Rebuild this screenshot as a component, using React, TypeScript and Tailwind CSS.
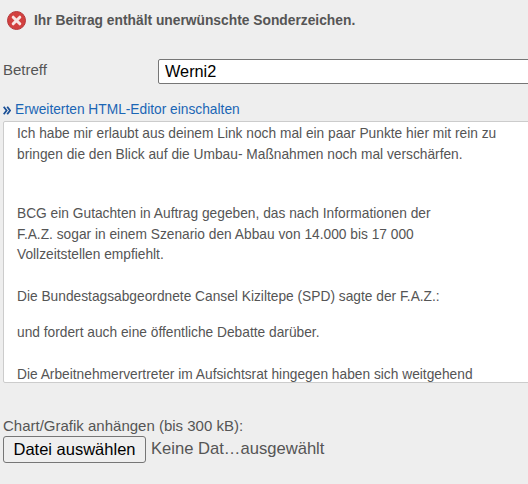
export default function App() {
  const font = { fontFamily: '"Liberation Sans", Arial, sans-serif' };
  return (
    <div style={font} className="w-[528px] h-[484px] overflow-hidden bg-[#eeeeee] text-[#555555] font-['Liberation_Sans',Arial,sans-serif]">
      <div className="flex items-center h-[21px] mt-[10px] ml-[7px] gap-[8px]">
        <svg width="19" height="19" viewBox="0 0 19 19" className="shrink-0">
          <circle cx="9.5" cy="9.5" r="9" fill="#d2403f" stroke="#b5393c" strokeWidth="1" />
          <path d="M6.2 6.2 L12.8 12.8 M12.8 6.2 L6.2 12.8" stroke="#f7e6e4" strokeWidth="3" strokeLinecap="round" />
        </svg>
        <span className="text-[13.8px] font-bold leading-[21px] text-[#555555]">Ihr Beitrag enthält unerwünschte Sonderzeichen.</span>
      </div>
      <div className="flex items-center mt-[28px] h-[25px] ml-[3px] w-[600px]">
        <label className="w-[155px] text-[15px] leading-[20px] text-[#555555] relative top-[-2px]">Betreff</label>
        <input readOnly value="Werni2" className="w-[440px] h-[25px] bg-white border border-[#767676] rounded-[2px] px-[6px] text-[16.3px] text-black outline-none" />
      </div>
      <div className="mt-[16px] ml-[3px] flex items-center h-[20px] text-[13.75px] leading-[20px] gap-[4px]">
        <svg width="8" height="9" viewBox="0 0 8 9" className="shrink-0" fill="none" stroke="#1a4f96" strokeWidth="1.8">
          <path d="M0.7 0.7 L3.6 4.5 L0.7 8.3" />
          <path d="M4.2 0.7 L7.1 4.5 L4.2 8.3" />
        </svg>
        <a className="text-[#1b66b5]">Erweiterten HTML-Editor einschalten</a>
      </div>
      <div className="mt-[1px] ml-[3px] w-[560px] h-[262px] bg-white border border-[#cccccc] rounded-[2px] overflow-hidden pl-[13px] pt-[2px] text-[13.75px] text-[#555555]">
        <div className="leading-[20.5px] w-[495px]">
          <p>Ich habe mir erlaubt aus deinem Link noch mal ein paar Punkte hier mit rein zu<br />bringen die den Blick auf die Umbau- Maßnahmen noch mal verschärfen.</p>
          <p className="mt-[39px]">BCG ein Gutachten in Auftrag gegeben, das nach Informationen der<br />F.A.Z. sogar in einem Szenario den Abbau von 14.000 bis 17 000<br />Vollzeitstellen empfiehlt.</p>
          <p className="mt-[21px]">Die Bundestagsabgeordnete Cansel Kiziltepe (SPD) sagte der F.A.Z.:</p>
          <p className="mt-[16px]">und fordert auch eine öffentliche Debatte darüber.</p>
          <p className="mt-[21px]">Die Arbeitnehmervertreter im Aufsichtsrat hingegen haben sich weitgehend</p>
        </div>
      </div>
      <div className="mt-[33px] ml-[3px] text-[15px] leading-[20px] text-[#555555]">Chart/Grafik anhängen (bis 300 kB):</div>
      <div className="mt-0 ml-[3px] flex items-center text-[16.6px]">
        <button className="h-[27px] w-[143px] bg-[#efefef] border border-[#767676] rounded-[3px] text-black text-[16.5px] text-center">Datei auswählen</button>
        <span className="ml-[5px] text-[#555555]">Keine Dat…ausgewählt</span>
      </div>
    </div>
  );
}
